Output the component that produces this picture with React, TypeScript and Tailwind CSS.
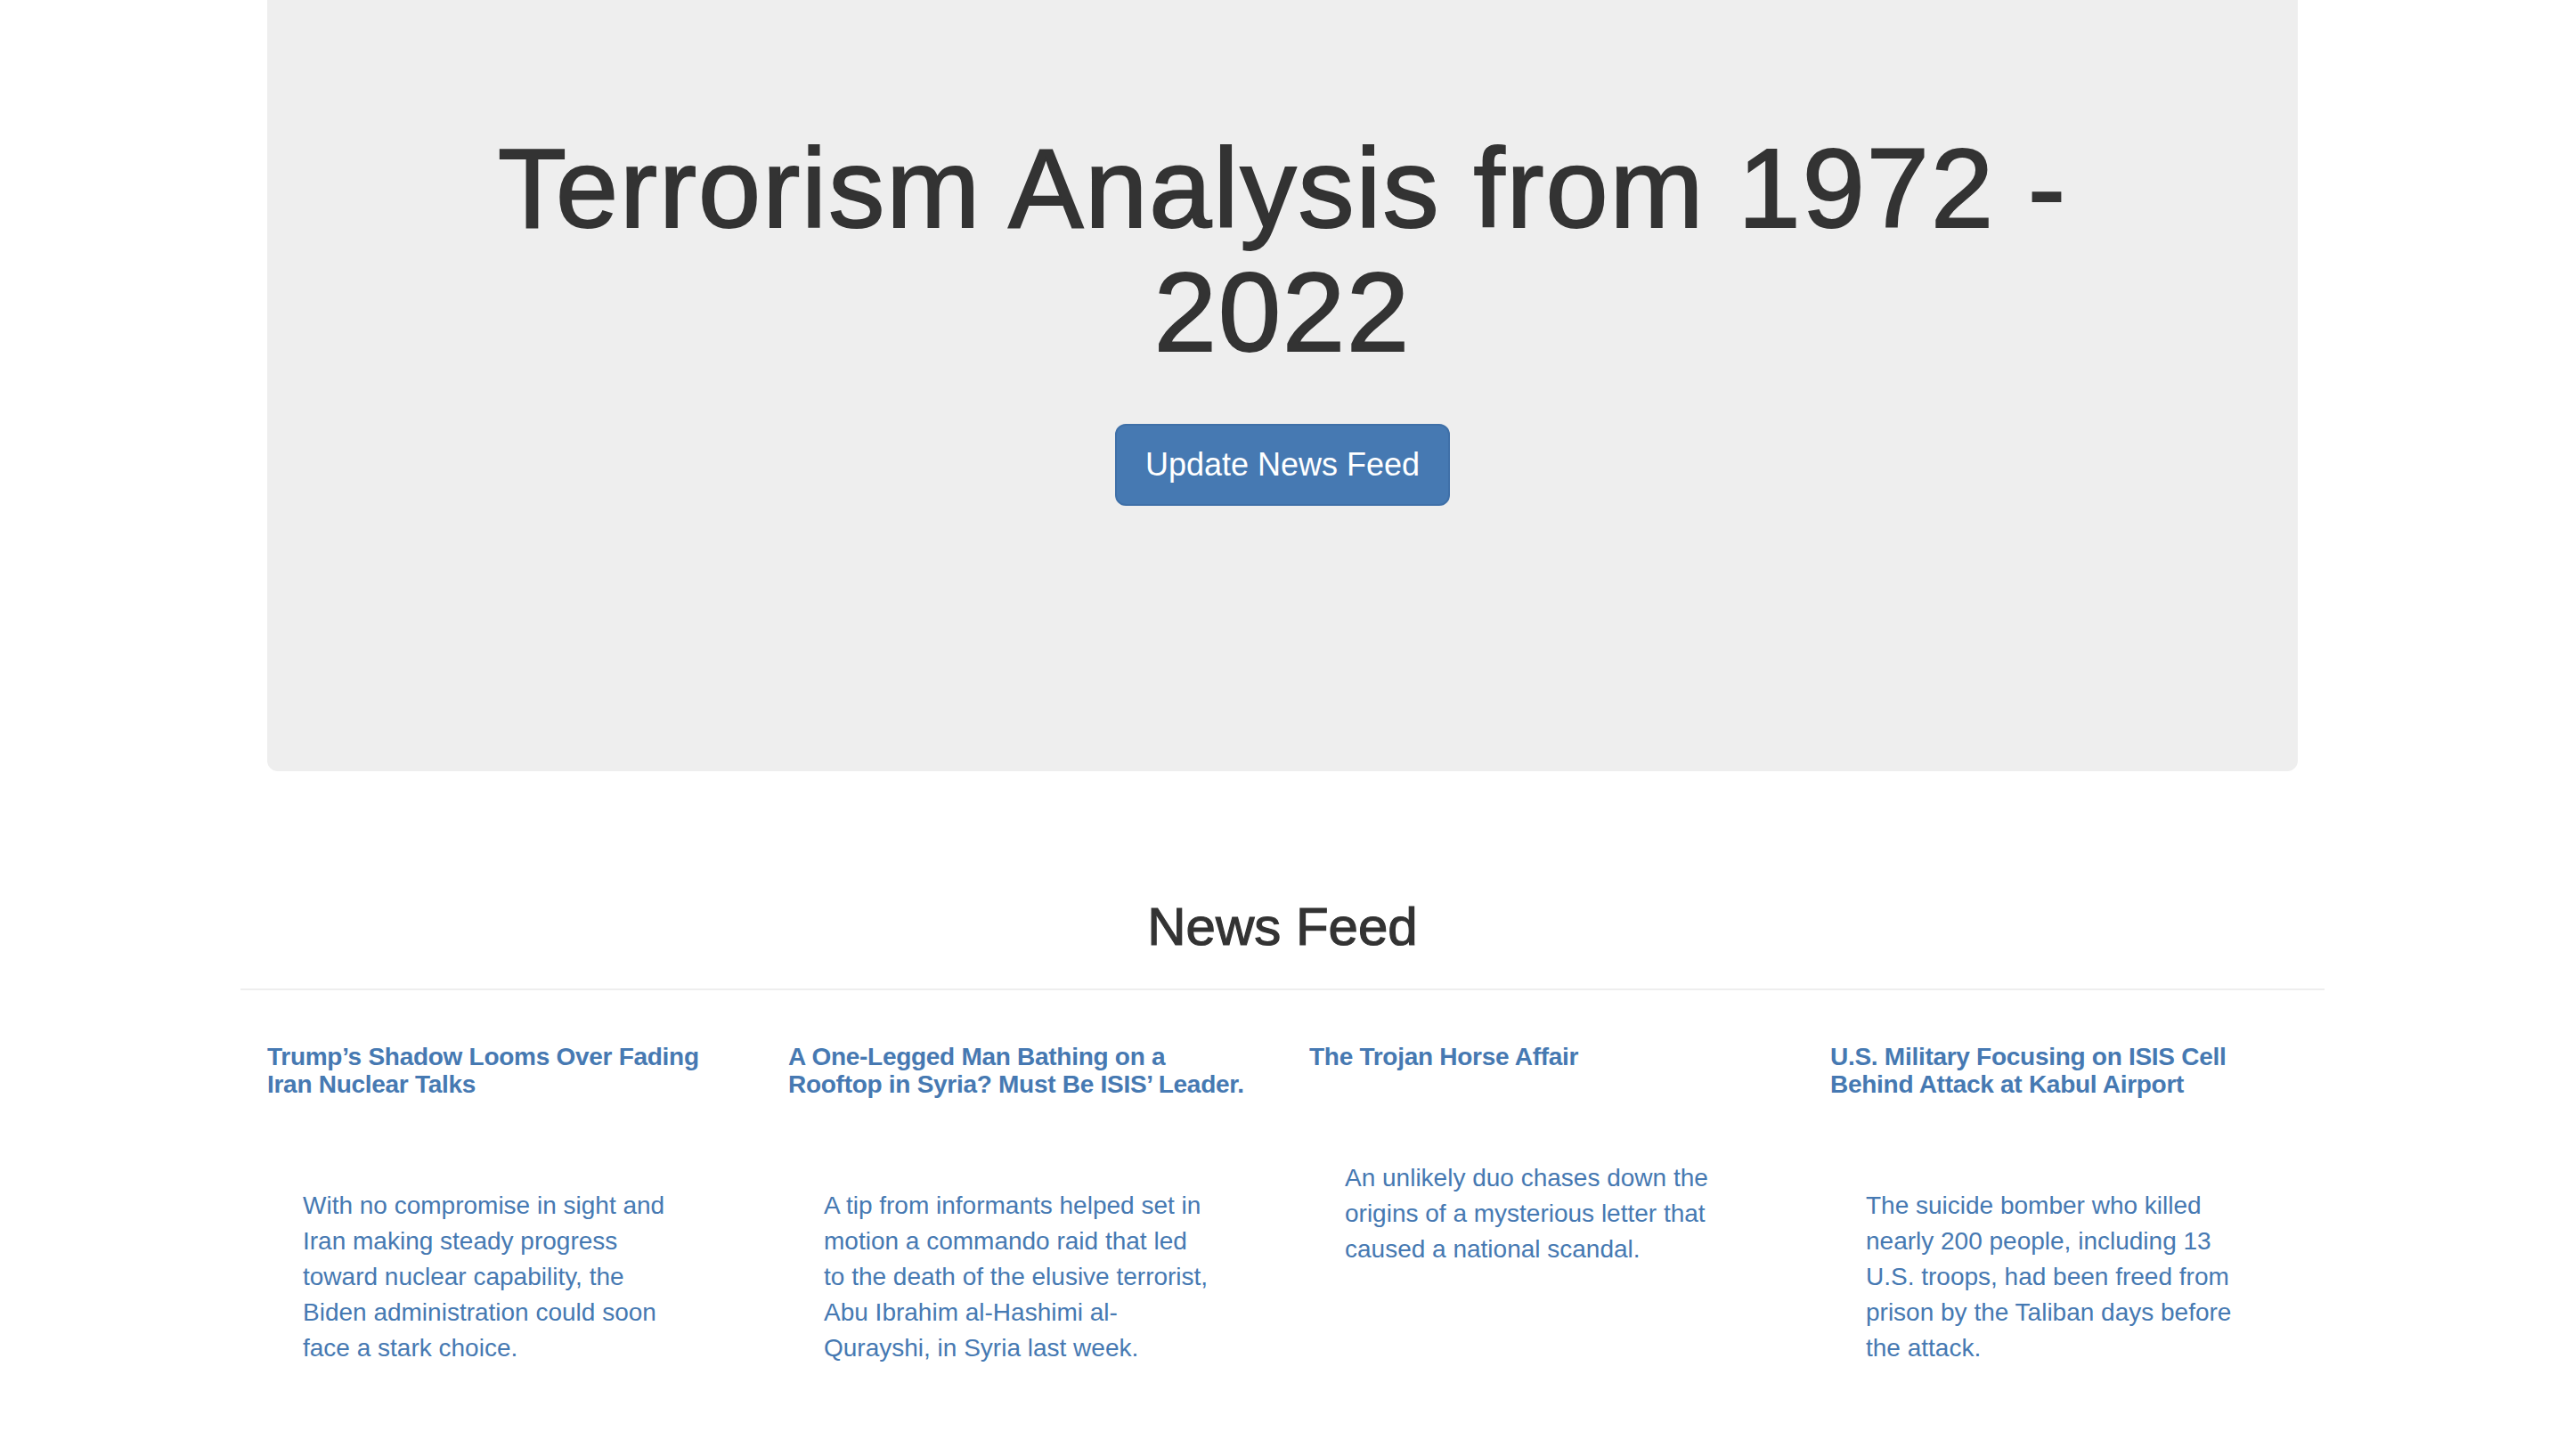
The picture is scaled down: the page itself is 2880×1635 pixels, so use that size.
import React from 'react';

const stories = [
  {
    title: 'Trump’s Shadow Looms Over Fading Iran Nuclear Talks',
    summary:
      'With no compromise in sight and Iran making steady progress toward nuclear capability, the Biden administration could soon face a stark choice.',
  },
  {
    title: 'A One-Legged Man Bathing on a Rooftop in Syria? Must Be ISIS’ Leader.',
    summary:
      'A tip from informants helped set in motion a commando raid that led to the death of the elusive terrorist, Abu Ibrahim al-Hashimi al-Qurayshi, in Syria last week.',
  },
  {
    title: 'The Trojan Horse Affair',
    summary: 'An unlikely duo chases down the origins of a mysterious letter that caused a national scandal.',
  },
  {
    title: 'U.S. Military Focusing on ISIS Cell Behind Attack at Kabul Airport',
    summary:
      'The suicide bomber who killed nearly 200 people, including 13 U.S.\u00a0troops, had been freed from prison by the Taliban days before the attack.',
  },
];

export default function App() {
  return (
    <div className="min-h-screen bg-white font-['Liberation_Sans',Arial,sans-serif] text-[#333333]">
      <div className="mx-auto w-[2340px] px-[30px] pb-[120px]">
        {/* jumbotron */}
        <div className="h-[866px] rounded-b-[12px] bg-[#eeeeee] px-[120px] pt-[143px] text-center">
          <h1 className="text-[126px] leading-[138.6px] font-normal tracking-[0.016em] [-webkit-text-stroke:2px_#333333]">
            Terrorism Analysis from 1972 -
            <br />
            2022
          </h1>
          <button className="mt-[56px] inline-block rounded-[12px] border-2 border-[#3f70a8] bg-[#4679b2] px-[32px] py-[20px] text-[36px] leading-[48px] text-white">
            Update News Feed
          </button>
        </div>

        <h2 className="mt-[142px] text-center text-[60px] leading-[66px] font-normal [-webkit-text-stroke:1.2px_#333333]">
          News Feed
        </h2>

        <div className="-mx-[30px]">
          <hr className="mt-[36px] border-0 border-t-2 border-[#eeeeee]" />
          <div className="grid grid-cols-4">
            {stories.map((s) => (
              <div key={s.title} className="px-[30px] pt-[60px]">
                <a href="#" className="block text-[28px] leading-[30.8px] font-bold tracking-[-0.01em] text-[#4679b2]">
                  {s.title}
                </a>
                <a href="#" className="mt-[100px] block w-[515px] pl-[40px] pr-[40px] text-[28px] leading-[40px] text-[#4679b2]">
                  {s.summary}
                </a>
              </div>
            ))}
          </div>
        </div>
      </div>
    </div>
  );
}
